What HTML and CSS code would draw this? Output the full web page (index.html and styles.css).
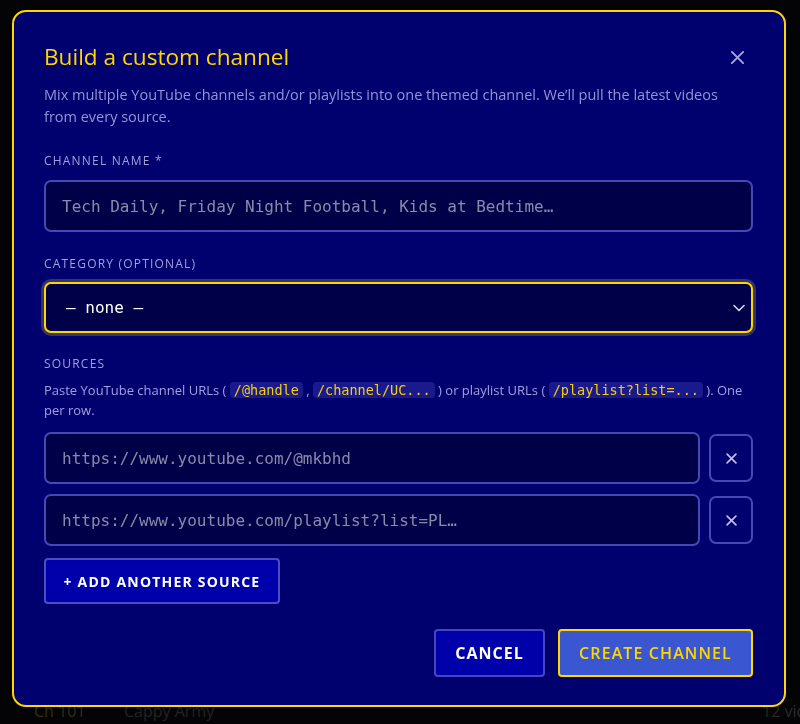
FILE: index.html
```html
<!DOCTYPE html>
<html lang="en">
<head>
<meta charset="utf-8">
<title>Build a custom channel</title>
<link rel="stylesheet" href="styles.css">
</head>
<body>
<div class="backdrop">
  <div class="bg-row bg-row-last"><span class="bg-ch">Ch 101</span><span class="bg-name">Cappy Army</span><span class="bg-count">12 vide</span></div>
</div>
<div class="overlay">
  <div class="dialog" role="dialog" aria-labelledby="dlg-title">
    <div class="dialog-head">
      <h2 id="dlg-title" class="title">Build a custom channel</h2>
      <button class="close" aria-label="Close">
        <svg width="15" height="15" viewBox="0 0 16 16"><path d="M2 2 L14 14 M14 2 L2 14" stroke="currentColor" stroke-width="2" stroke-linecap="round" fill="none"/></svg>
      </button>
    </div>
    <p class="desc">Mix multiple YouTube channels and/or playlists into one themed channel. We’ll pull the latest videos from every source.</p>

    <label class="label label-first">Channel name *</label>
    <input class="field" type="text" placeholder="Tech Daily, Friday Night Football, Kids at Bedtime…">

    <label class="label">Category (optional)</label>
    <div class="select">
      <span class="select-value">— none —</span>
      <svg class="chevron" width="12" height="8" viewBox="0 0 12 8"><path d="M1 1.5 L6 6.5 L11 1.5" stroke="currentColor" stroke-width="1.6" fill="none" stroke-linecap="round" stroke-linejoin="round"/></svg>
    </div>

    <label class="label label-sources">Sources</label>
    <p class="help">Paste YouTube channel URLs ( <code>/@handle</code> , <code>/channel/UC...</code> ) or playlist URLs ( <code>/playlist?list=...</code> ). One per row.</p>

    <div class="sources">
      <div class="source-row">
        <input class="field source" type="text" placeholder="https://www.youtube.com/@mkbhd">
        <button class="remove" aria-label="Remove"><svg width="11" height="11" viewBox="0 0 10 10"><path d="M1 1 L9 9 M9 1 L1 9" stroke="currentColor" stroke-width="1.5" stroke-linecap="round" fill="none"/></svg></button>
      </div>
      <div class="source-row">
        <input class="field source" type="text" placeholder="https://www.youtube.com/playlist?list=PL…">
        <button class="remove" aria-label="Remove"><svg width="11" height="11" viewBox="0 0 10 10"><path d="M1 1 L9 9 M9 1 L1 9" stroke="currentColor" stroke-width="1.5" stroke-linecap="round" fill="none"/></svg></button>
      </div>
    </div>

    <button class="add">+ Add another source</button>

    <div class="footer">
      <button class="btn cancel">Cancel</button>
      <button class="btn create">Create channel</button>
    </div>
  </div>
</div>
</body>
</html>
```

FILE: styles.css
```css
* { box-sizing: border-box; }
html, body { margin: 0; padding: 0; }
body {
  width: 800px;
  height: 724px;
  background: #050507;
  overflow: hidden;
  font-family: "Open Sans", "Noto Sans", sans-serif;
}
.backdrop {
  height: 724px;
  display: flex;
  flex-direction: column;
  justify-content: flex-end;
}
.bg-row {
  display: flex;
  align-items: center;
  height: 26px;
  padding-left: 34px;
  font-size: 16px;
  color: #2c2c2c;
  white-space: nowrap;
}
.bg-ch { color: #3a3a22; width: 90px; }
.bg-name { flex: 1; }
.bg-count { width: 38px; overflow: hidden; color: #2e2e2e; }

.overlay {
  position: fixed;
  inset: 0;
  padding: 10px 14px 17px 12px;
}
.dialog {
  width: 774px;
  height: 697px;
  background: #00006e;
  border: 2px solid #ffd700;
  border-radius: 14px;
  padding: 31px 31px 28px 30px;
  display: flex;
  flex-direction: column;
  box-shadow: 0 0 30px rgba(0,0,0,0.6);
}
.dialog-head {
  display: flex;
  align-items: center;
  justify-content: space-between;
  height: 28px;
}
.title {
  margin: 0;
  font-size: 22.6px;
  font-weight: 400;
  color: #ffd700;
  line-height: 28px;
}
.close {
  background: none;
  border: 0;
  padding: 0;
  color: #a4a4e6;
  width: 15px;
  height: 15px;
  margin-right: 8px;
  display: flex;
}
.desc {
  margin: 13px 0 0;
  font-size: 14.5px;
  line-height: 22px;
  color: #9494d8;
}
.label {
  display: block;
  margin-top: 24px;
  font-size: 12px;
  line-height: 16px;
  letter-spacing: 1.2px;
  text-transform: uppercase;
  color: #a0a0dc;
}
.label-first { margin-top: 25px; }
.label-sources { margin-top: 23px; }
.field {
  display: block;
  width: 100%;
  height: 52px;
  margin-top: 11px;
  background: #000048;
  border: 2px solid #4848b4;
  border-radius: 7px;
  padding: 0 16px;
  font-family: "DejaVu Sans Mono", monospace;
  font-size: 16px;
  color: #e8e8ff;
  outline: none;
}
.field::placeholder { color: #8a8aac; }
.select {
  margin-top: 10px;
  height: 51px;
  background: #000048;
  border: 2px solid #ffd700;
  border-radius: 7px;
  box-shadow: 0 0 0 3px #34346c;
  display: flex;
  align-items: center;
  justify-content: space-between;
  padding: 0 6px 0 20px;
}
.select-value {
  font-family: "DejaVu Sans Mono", monospace;
  font-size: 16px;
  color: #ffffff;
}
.chevron { color: #d8d8f0; }
.help {
  margin: 8px 0 0;
  font-size: 13px;
  line-height: 20px;
  color: #a0a0e0;
}
.help code {
  font-family: "DejaVu Sans Mono", monospace;
  font-size: 13.5px;
  color: #f2cf12;
  background: #1a1a8c;
  border-radius: 4px;
  padding: 0 4px;
}
.sources {
  margin-top: 12px;
  display: flex;
  flex-direction: column;
  gap: 10px;
}
.source-row {
  display: flex;
  align-items: center;
  gap: 9px;
}
.field.source { margin-top: 0; flex: 1; }
.remove {
  flex: none;
  width: 44px;
  height: 48px;
  background: #00006e;
  border: 2px solid #4848b4;
  border-radius: 7px;
  color: #c0c0ee;
  display: flex;
  align-items: center;
  justify-content: center;
  padding: 0;
}
.add {
  align-self: flex-start;
  margin-top: 12px;
  height: 46px;
  width: 236px;
  background: #0000aa;
  border: 2px solid #4c4cc4;
  border-radius: 4px;
  color: #ffffff;
  font-family: "Open Sans", sans-serif;
  font-weight: 700;
  font-size: 14px;
  letter-spacing: 1.2px;
  text-transform: uppercase;
}
.footer {
  margin-top: auto;
  display: flex;
  justify-content: flex-end;
  gap: 13px;
}
.btn {
  height: 48px;
  border-radius: 4px;
  font-family: "Open Sans", sans-serif;
  font-size: 16px;
  text-transform: uppercase;
}
.cancel {
  width: 111px;
  background: #0000aa;
  border: 2px solid #4646c0;
  color: #ffffff;
  font-weight: 700;
  letter-spacing: 1px;
}
.create {
  width: 195px;
  background: #3a56d0;
  border: 2px solid #ffd700;
  color: #ffd700;
  font-weight: 600;
  letter-spacing: 1.1px;
}
```
